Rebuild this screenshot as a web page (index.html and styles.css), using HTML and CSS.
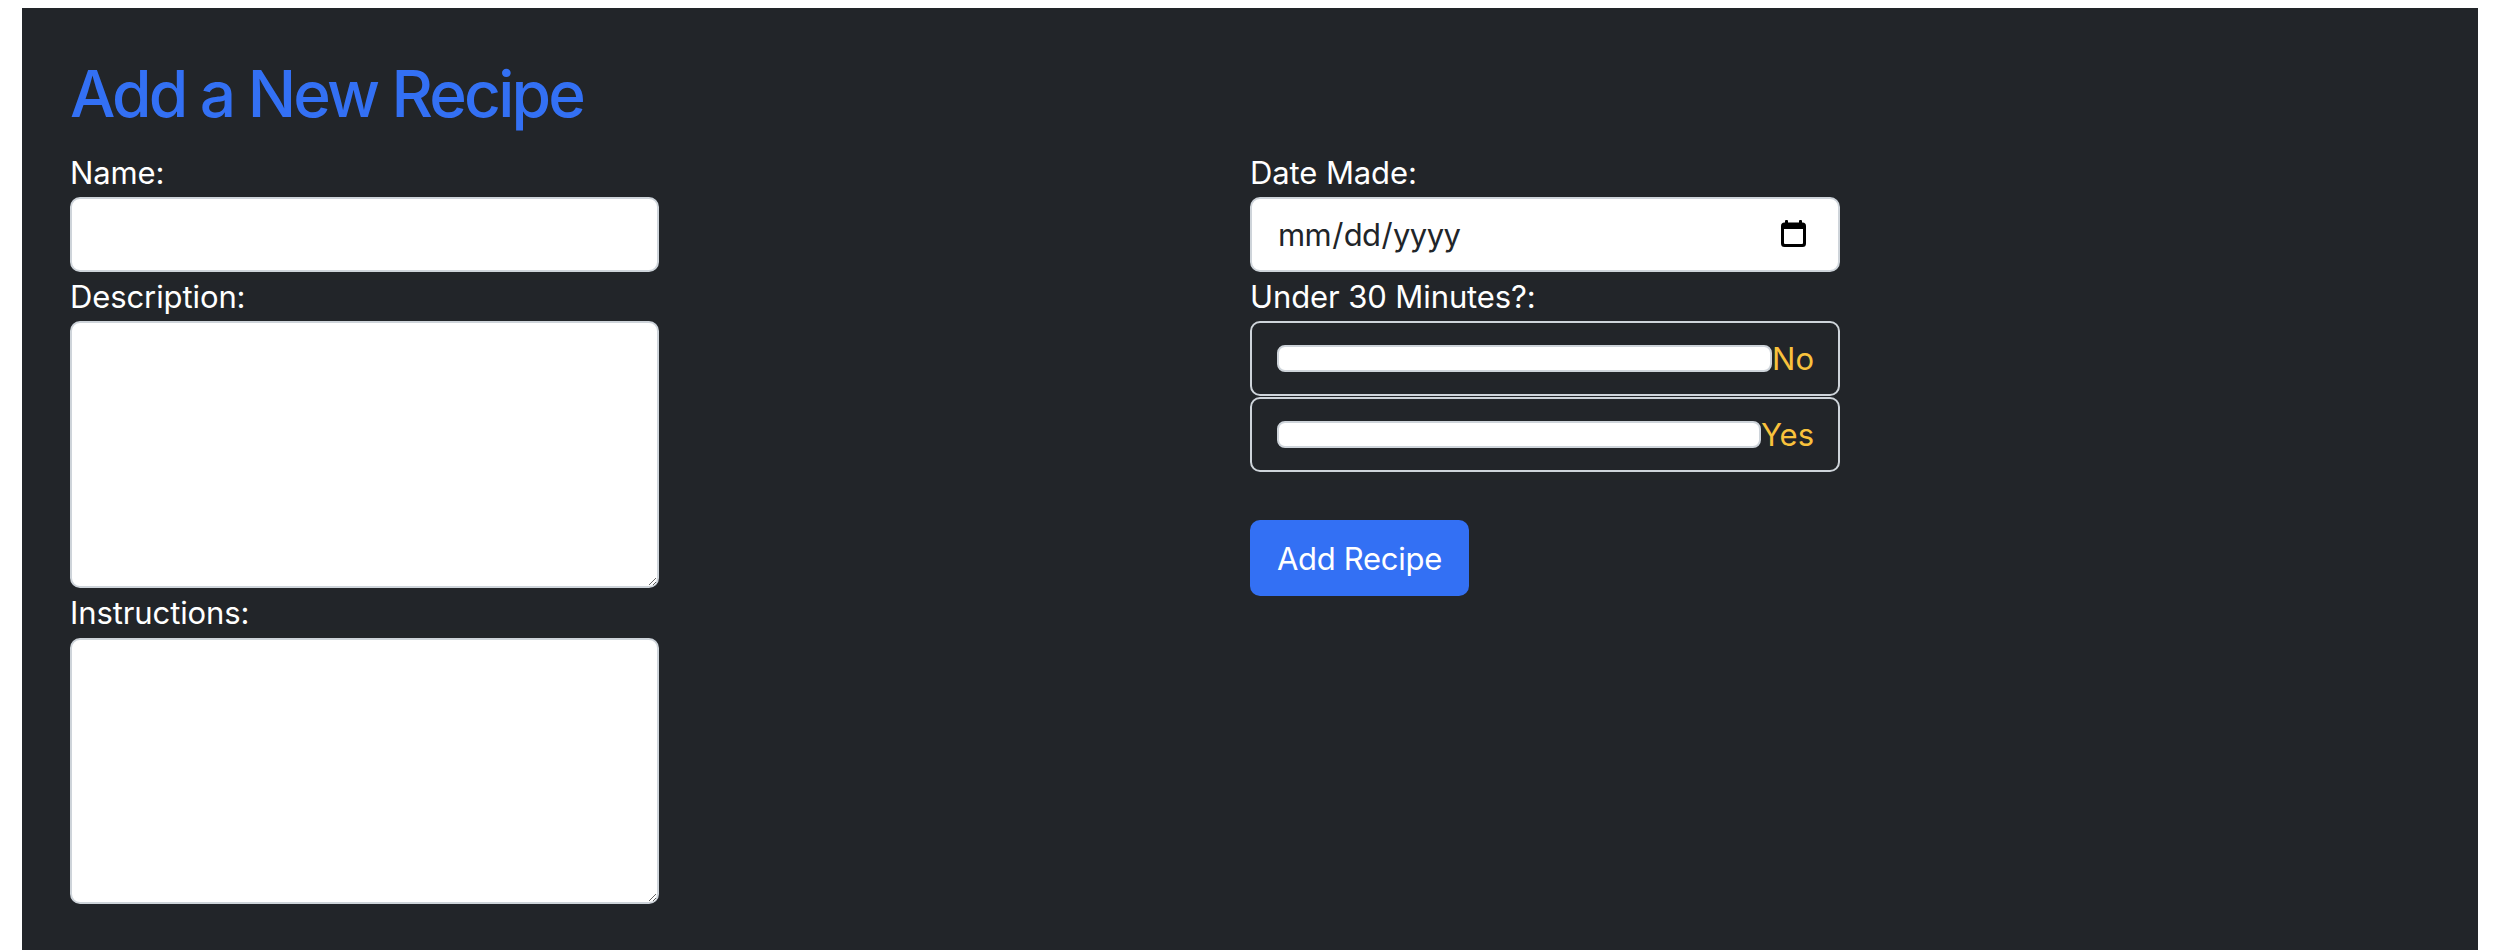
FILE: index.html
```html
<!DOCTYPE html>
<html lang="en">
<head>
<meta charset="utf-8">
<title>Add a New Recipe</title>
<link rel="stylesheet" href="styles.css">
</head>
<body>
<div class="page">
  <main class="panel">
    <h1 class="title">Add a New Recipe</h1>
    <form class="recipe-form">
      <div class="col">
        <label class="field-label" for="name">Name:</label>
        <input id="name" class="control" type="text">
        <label class="field-label" for="description">Description:</label>
        <textarea id="description" class="control area"></textarea>
        <label class="field-label" for="instructions">Instructions:</label>
        <textarea id="instructions" class="control area"></textarea>
      </div>
      <div class="col">
        <label class="field-label" for="date">Date Made:</label>
        <div class="date-wrap">
          <input id="date" class="control date" type="date">
          <svg class="cal-icon" width="25" height="27" viewBox="0 0 25 27" aria-hidden="true">
            <rect x="4" y="0" width="3" height="5" rx="1" fill="#000"/>
            <rect x="18" y="0" width="3" height="5" rx="1" fill="#000"/>
            <path fill="#000" fill-rule="evenodd" d="M3.5 2.5h18a3.5 3.5 0 0 1 3.5 3.5v17.5a3.5 3.5 0 0 1-3.5 3.5h-18A3.5 3.5 0 0 1 0 23.5V6a3.5 3.5 0 0 1 3.5-3.5zM3 9v14a1 1 0 0 0 1 1h17a1 1 0 0 0 1-1V9z"/>
          </svg>
        </div>
        <label class="field-label">Under 30 Minutes?:</label>
        <label class="choice">
          <input class="choice-bar" type="radio" name="quick" value="no">
          <span class="choice-text">No</span>
        </label>
        <label class="choice">
          <input class="choice-bar" type="radio" name="quick" value="yes">
          <span class="choice-text">Yes</span>
        </label>
        <button class="submit" type="submit">Add Recipe</button>
      </div>
    </form>
  </main>
</div>
</body>
</html>
```
FILE: styles.css
```css
* {
  box-sizing: border-box;
}

html, body {
  margin: 0;
  background: #ffffff;
}

body {
  font-family: Inter, "Liberation Sans", sans-serif;
  color: #ffffff;
}

.page {
  padding: 8px 40px 0 22px;
  min-height: 100vh;
  display: flex;
}

.panel {
  flex: 1;
  background: #222529;
  padding: 48px 48px 40px 48px;
}

.title {
  margin: 0 0 15px 0;
  font-size: 64px;
  font-weight: 500;
  line-height: 1.2;
  letter-spacing: -2.8px;
  color: #3370f4;
}

.recipe-form {
  display: grid;
  grid-template-columns: 1fr 1fr;
}

.col {
  display: flex;
  flex-direction: column;
  align-items: flex-start;
}

.field-label {
  display: block;
  font-size: 31px;
  line-height: 49.6px;
  letter-spacing: -0.1px;
  color: #ffffff;
}

.control {
  display: block;
  width: 589px;
  height: 74.4px;
  margin: 0;
  padding: 0 25px;
  border: 2px solid #ced4da;
  border-radius: 10px;
  background: #ffffff;
  color: #212529;
  font-family: Inter, "Liberation Sans", sans-serif;
  font-size: 31px;
  letter-spacing: -0.6px;
}

.area {
  height: 266.6px;
  padding: 12px 25px;
  resize: vertical;
}

.date-wrap {
  position: relative;
  width: 590px;
}

.date {
  width: 590px;
}

.date::-webkit-calendar-picker-indicator {
  display: none;
}

.cal-icon {
  position: absolute;
  right: 34px;
  top: 23px;
}

.choice {
  display: flex;
  align-items: center;
  width: 590px;
  height: 74.4px;
  padding: 0 24px 0 25px;
  border: 2px solid #ced4da;
  border-radius: 10px;
  background: transparent;
}

.choice + .choice {
  margin-top: 1.6px;
}

.choice-bar {
  appearance: none;
  -webkit-appearance: none;
  flex: 1;
  height: 27px;
  margin: 0;
  background: #ffffff;
  border: 2px solid #ced4da;
  border-radius: 8px;
}

.choice-text {
  color: #f9c23c;
  font-size: 31px;
  line-height: 1;
}

.submit {
  margin-top: 48.7px;
  height: 75.7px;
  padding: 0 27px;
  border: none;
  border-radius: 10px;
  background: #3370f4;
  color: #ffffff;
  font-family: Inter, "Liberation Sans", sans-serif;
  font-size: 31px;
  letter-spacing: -0.3px;
  cursor: pointer;
}
```
